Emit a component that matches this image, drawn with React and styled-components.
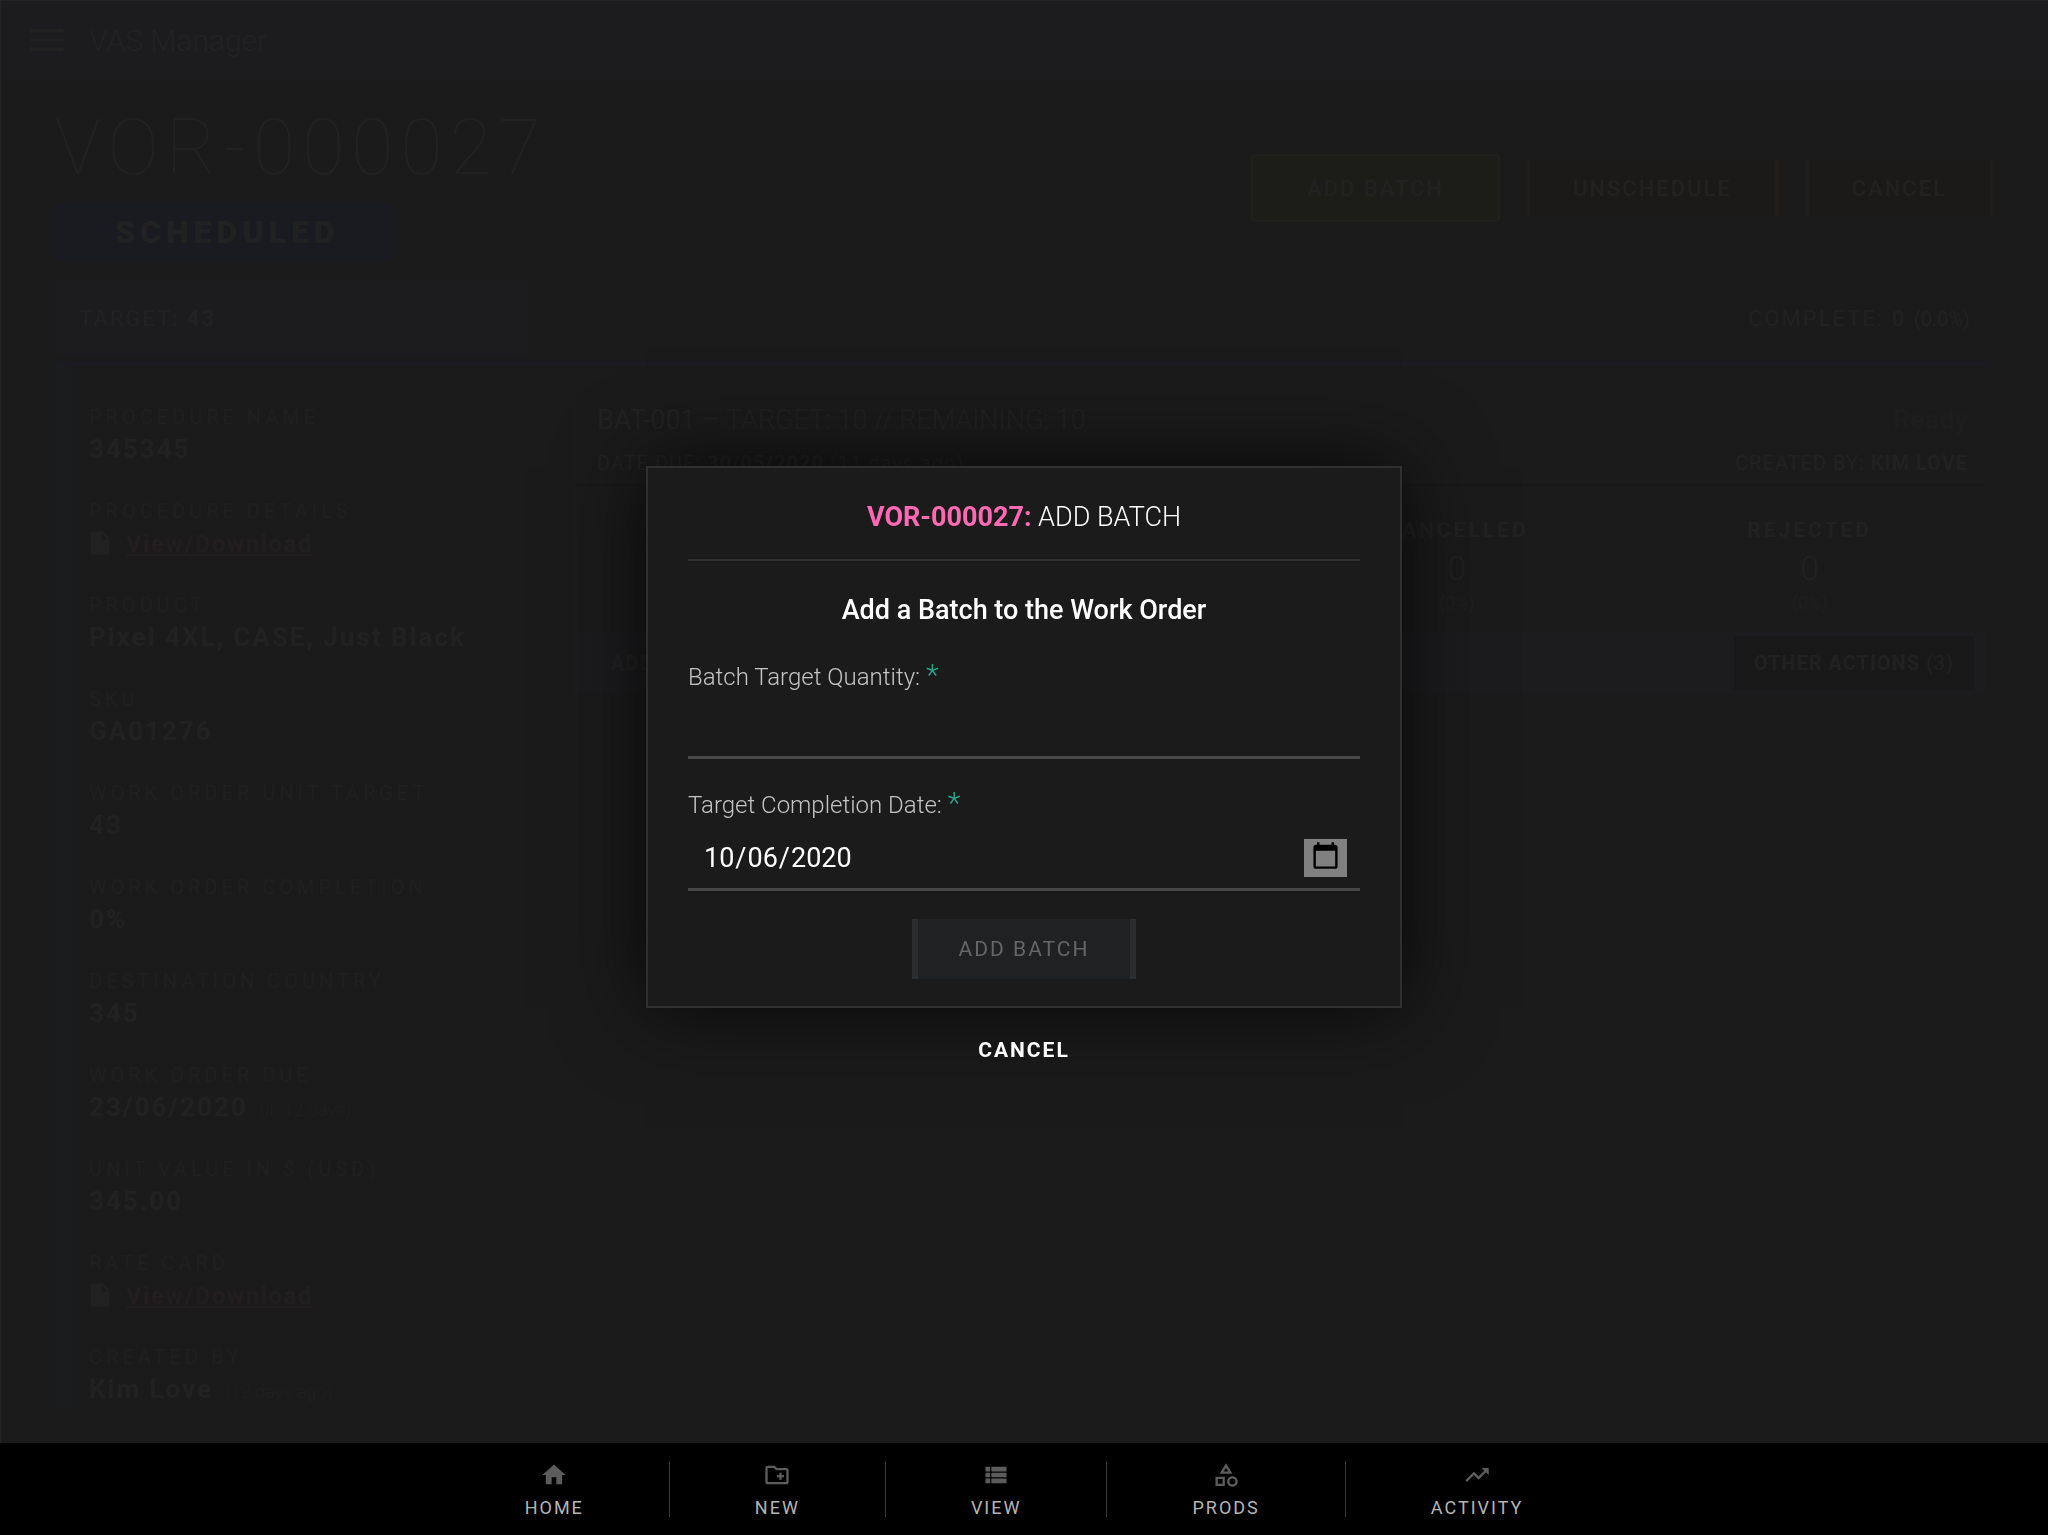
import React, { useState } from "react";
import styled, { createGlobalStyle, css } from "styled-components";
import {
  MdHome,
  MdOutlineCreateNewFolder,
  MdViewList,
  MdOutlineCategory,
  MdTrendingUp,
  MdInsertDriveFile,
  MdMenu,
} from "react-icons/md";

const color = {
  page: "#1b1b1b",
  bar: "#1c1c1e",
  navy: "#1b1b21",
  edge: "#222325",
  faint: "#212121",
  fainter: "#1f1f1f",
  pink: "#ff69b4",
  teal: "#26a68f",
};

const GlobalStyle = createGlobalStyle`
  *, *::before, *::after { box-sizing: border-box; }
  body {
    margin: 0;
    background: ${color.page};
    color: #fff;
    font-family: Roboto, "Liberation Sans", sans-serif;
  }
  h1, h2, h3, p, dl, dd { margin: 0; }
  button, input { font-family: inherit; }
`;

const Shell = styled.div`
  display: flex;
  flex-direction: column;
  height: 100vh;
  overflow: hidden;
`;

const Page = styled.div`
  flex: 1;
  min-height: 0;
  overflow: hidden;
  border: solid ${color.edge};
  border-width: 1px 0 0 1px;
`;

const TopBar = styled.header`
  display: flex;
  align-items: center;
  gap: 20px;
  height: 78px;
  padding: 0 24px;
  background: ${color.bar};
  color: ${color.faint};
  font-size: 30px;
  font-weight: 300;
`;

const MenuIcon = styled(MdMenu)`
  width: 44px;
  height: 44px;
`;

const Heading = styled.div`
  display: flex;
  justify-content: space-between;
  align-items: flex-start;
  padding: 25px 54px 0;
`;

const OrderId = styled.h1`
  color: ${color.faint};
  font-size: 77px;
  line-height: 88px;
  font-weight: 100;
  letter-spacing: 7px;
`;

const Status = styled.span`
  display: inline-block;
  margin-top: 12px;
  padding: 0 52px 0 60px;
  background: #1a1b20;
  color: ${color.faint};
  font-size: 32px;
  line-height: 56px;
  font-weight: 900;
  letter-spacing: 5px;
`;

const Actions = styled.div`
  display: flex;
  align-items: center;
  gap: 26px;
  padding-top: 50px;
`;

const tones = {
  go: css`
    height: 68px;
    padding: 0 54px;
    border: 2px solid #1f201c;
    border-radius: 4px;
    background: #1c1d19;
  `,
  stop: css`
    height: 58px;
    padding: 0 43px;
    border: solid #1f1c1c;
    border-width: 0 4px;
    background: #1c1919;
  `,
};

const ActionButton = styled.button`
  ${(p) => tones[p.$tone]}
  color: ${color.faint};
  font-size: 22px;
  font-weight: 500;
  letter-spacing: 2px;
`;

const Totals = styled.div`
  display: flex;
  justify-content: space-between;
  margin: 21px 54px 0;
  color: ${color.faint};
  font-size: 22px;
  line-height: 76px;
  letter-spacing: 2px;

  small {
    font-size: 20px;
    letter-spacing: 0;
  }
`;

const Total = styled.span`
  flex: ${(p) => (p.$filled ? "0 0 472px" : "none")};
  padding: 0 24px;
  background: ${(p) => (p.$filled ? color.bar : "transparent")};
`;

const Panel = styled.div`
  display: flex;
  align-items: flex-start;
  gap: 14px;
  margin: 4px 62px 0 54px;
  border-top: 5px solid ${color.navy};
  border-left: 16px solid #1a1c1e;
`;

const Details = styled.dl`
  flex: 0 0 488px;
  padding: 37px 16px 0 18px;
  display: grid;
  gap: 30px;
`;

const Term = styled.dt`
  color: ${color.fainter};
  font-size: 20px;
  line-height: 28px;
  letter-spacing: 4px;
`;

const Value = styled.dd`
  display: flex;
  align-items: baseline;
  gap: 12px;
  height: 36px;
  color: ${color.faint};
  font-size: 26px;
  line-height: 36px;
  font-weight: 700;
  letter-spacing: 2px;

  small {
    color: ${color.fainter};
    font-size: 18px;
    font-weight: 300;
    letter-spacing: 0;
  }
`;

const FileIcon = styled(MdInsertDriveFile)`
  width: 28px;
  height: 28px;
  align-self: center;
  margin-left: -3px;
`;

const FileLink = styled.a`
  color: #221e1f;
  font-size: 23px;
  line-height: 40px;
`;

const Batch = styled.section`
  flex: 1;
  margin-top: 32px;
  border-left: 2px solid ${color.navy};
`;

const BatchRow = styled.div`
  display: flex;
  justify-content: space-between;
  padding: 0 18px 0 22px;
  color: ${color.faint};
  font-size: ${(p) => (p.$minor ? 20 : 27)}px;
  line-height: ${(p) => (p.$minor ? 42 : 44)}px;
  letter-spacing: ${(p) => (p.$minor ? 1 : 0)}px;
  font-weight: ${(p) => (p.$minor ? 400 : 300)};
`;

const BatchState = styled.span`
  color: #1d1d1d;
  font-weight: 700;
`;

const Counts = styled.div`
  display: grid;
  grid-template-columns: repeat(4, 1fr);
  height: 148px;
  padding-top: 30px;
  border-top: 2px solid #191919;
  text-align: center;
`;

const Count = styled.div`
  grid-column-start: ${(p) => p.$column};
  color: ${color.faint};

  h3 {
    font-size: 21px;
    line-height: 28px;
    letter-spacing: 3px;
  }
  p {
    font-size: 34px;
    line-height: 48px;
    font-weight: 300;
  }
  small {
    color: ${color.fainter};
    font-size: 18px;
  }
`;

const BatchFooter = styled.div`
  display: flex;
  justify-content: space-between;
  align-items: center;
  padding: 4px 12px 4px 16px;
  background: ${color.bar};
`;

const FooterButton = styled.button`
  height: 54px;
  padding: 0 20px;
  border: 0;
  background: ${(p) => (p.$filled ? "#191919" : "transparent")};
  color: ${color.faint};
  font-size: 20px;
  font-weight: 700;
  letter-spacing: 1px;

  small {
    font-size: 20px;
    font-weight: 400;
  }
`;

const Overlay = styled.div`
  position: fixed;
  inset: 0;
  display: flex;
  flex-direction: column;
  align-items: center;
  justify-content: center;
`;

const Dialog = styled.form`
  display: flex;
  flex-direction: column;
  width: 756px;
  max-width: 100%;
  padding: 27px 40px;
  border: 2px solid #303030;
  background: #1b1b1b;
  box-shadow: 0 0 80px rgba(0, 0, 0, 0.75);
`;

const DialogTitle = styled.h2`
  padding-bottom: 20px;
  border-bottom: 2px solid #303030;
  font-size: 27px;
  line-height: 44px;
  font-weight: 300;
  text-align: center;

  strong {
    color: ${color.pink};
    font-weight: 700;
  }
`;

const DialogSubtitle = styled.h3`
  padding: 27px 0 23px;
  font-size: 27px;
  line-height: 44px;
  font-weight: 500;
  text-align: center;
`;

const Label = styled.label`
  color: #c4c4c4;
  font-size: 24px;
  line-height: 44px;
  font-weight: 300;
`;

const Required = styled.span`
  color: ${color.teal};
  font-size: 30px;
  line-height: 24px;
  font-weight: 300;
`;

const Field = styled.input`
  height: ${(p) => p.$height}px;
  margin-bottom: ${(p) => p.$after}px;
  padding: 0 13px 0 15px;
  border: 0;
  border-bottom: 3px solid #484848;
  border-radius: 0;
  outline: 0;
  background: transparent;
  color: #fff;
  font-size: 27px;
  appearance: none;

  &::-webkit-datetime-edit {
    padding: 0;
  }
  &::-webkit-calendar-picker-indicator {
    width: 31px;
    height: 32px;
    padding: 2px 6px 4px;
    background-color: #808080;
    box-sizing: content-box;
  }
`;

const Submit = styled.button`
  align-self: center;
  height: 60px;
  padding: 0 41px;
  border: solid #2b2d2f;
  border-width: 0 6px;
  background: #202123;
  color: #666;
  font-size: 21px;
  letter-spacing: 2px;
`;

const Cancel = styled.button`
  height: 38px;
  margin-top: 23px;
  padding: 0 12px;
  border: 0;
  background: transparent;
  color: #fff;
  font-size: 21px;
  font-weight: 700;
  letter-spacing: 2px;
`;

const Nav = styled.nav`
  position: relative;
  z-index: 1;
  display: flex;
  justify-content: center;
  align-items: flex-start;
  height: 92px;
  padding-top: 18px;
  background: #000;
`;

const NavLink = styled.a`
  display: flex;
  flex-direction: column;
  align-items: center;
  height: 56px;
  padding: 0 85px;
  color: #b4b4b4;
  font-size: 18px;
  line-height: 38px;
  letter-spacing: 2px;
  text-decoration: none;

  & + & {
    border-left: 1px solid #383838;
  }
  svg {
    flex: none;
    width: 28px;
    height: 28px;
    color: #5c5c5c;
  }
`;

const details = [
  ["PROCEDURE NAME", "345345"],
  ["PROCEDURE DETAILS", null],
  ["PRODUCT", "Pixel 4XL, CASE, Just Black"],
  ["SKU", "GA01276"],
  ["WORK ORDER UNIT TARGET", "43"],
  ["WORK ORDER COMPLETION", "0%"],
  ["DESTINATION COUNTRY", "345"],
  ["WORK ORDER DUE", "23/06/2020", "(in 12 days)"],
  ["UNIT VALUE IN $ (USD)", "345.00"],
  ["RATE CARD", null],
  ["CREATED BY", "Kim Love", "(12 days ago)"],
];

const links = [
  ["HOME", MdHome],
  ["NEW", MdOutlineCreateNewFolder],
  ["VIEW", MdViewList],
  ["PRODS", MdOutlineCategory],
  ["ACTIVITY", MdTrendingUp],
];

export default function App() {
  const [quantity, setQuantity] = useState("");
  const [date, setDate] = useState("2020-10-06");

  return (
    <Shell>
      <GlobalStyle />
      <Page>
        <TopBar>
          <MenuIcon />
          VAS Manager
        </TopBar>
        <Heading>
          <div>
            <OrderId>VOR-000027</OrderId>
            <Status>SCHEDULED</Status>
          </div>
          <Actions>
            <ActionButton $tone="go">ADD BATCH</ActionButton>
            <ActionButton $tone="stop">UNSCHEDULE</ActionButton>
            <ActionButton $tone="stop">CANCEL</ActionButton>
          </Actions>
        </Heading>
        <Totals>
          <Total $filled>
            TARGET: <strong>43</strong>
          </Total>
          <Total>
            COMPLETE: <strong>0</strong> <small>(0.0%)</small>
          </Total>
        </Totals>
        <Panel>
          <Details>
            {details.map(([term, value, note]) => (
              <div key={term}>
                <Term>{term}</Term>
                <Value>
                  {value || (
                    <>
                      <FileIcon />
                      <FileLink href="#file">View/Download</FileLink>
                    </>
                  )}
                  {note && <small>{note}</small>}
                </Value>
              </div>
            ))}
          </Details>
          <Batch>
            <BatchRow>
              <span>
                <strong>BAT-001</strong> – TARGET: 10 // REMAINING: 10
              </span>
              <BatchState>Ready</BatchState>
            </BatchRow>
            <BatchRow $minor>
              <span>
                DATE DUE: <strong>30/05/2020</strong> (11 days ago)
              </span>
              <span>
                CREATED BY: <strong>KIM LOVE</strong>
              </span>
            </BatchRow>
            <Counts>
              <Count $column={3}>
                <h3>CANCELLED</h3>
                <p>0</p>
                <small>(0%)</small>
              </Count>
              <Count $column={4}>
                <h3>REJECTED</h3>
                <p>0</p>
                <small>(0%)</small>
              </Count>
            </Counts>
            <BatchFooter>
              <FooterButton>ADD</FooterButton>
              <FooterButton $filled>
                OTHER ACTIONS <small>(3)</small>
              </FooterButton>
            </BatchFooter>
          </Batch>
        </Panel>
      </Page>

      <Overlay>
        <Dialog role="dialog" aria-labelledby="batch-title">
          <DialogTitle id="batch-title">
            <strong>VOR-000027:</strong> ADD BATCH
          </DialogTitle>
          <DialogSubtitle>Add a Batch to the Work Order</DialogSubtitle>
          <Label htmlFor="quantity">
            Batch Target Quantity: <Required>*</Required>
          </Label>
          <Field
            id="quantity"
            type="number"
            $height={60}
            $after={24}
            value={quantity}
            onChange={(e) => setQuantity(e.target.value)}
          />
          <Label htmlFor="date">
            Target Completion Date: <Required>*</Required>
          </Label>
          <Field
            id="date"
            type="date"
            $height={64}
            $after={28}
            value={date}
            onChange={(e) => setDate(e.target.value)}
          />
          <Submit type="submit" disabled>
            ADD BATCH
          </Submit>
        </Dialog>
        <Cancel type="button">CANCEL</Cancel>
      </Overlay>

      <Nav>
        {links.map(([label, Icon]) => (
          <NavLink key={label} href={`#${label.toLowerCase()}`}>
            <Icon />
            {label}
          </NavLink>
        ))}
      </Nav>
    </Shell>
  );
}
